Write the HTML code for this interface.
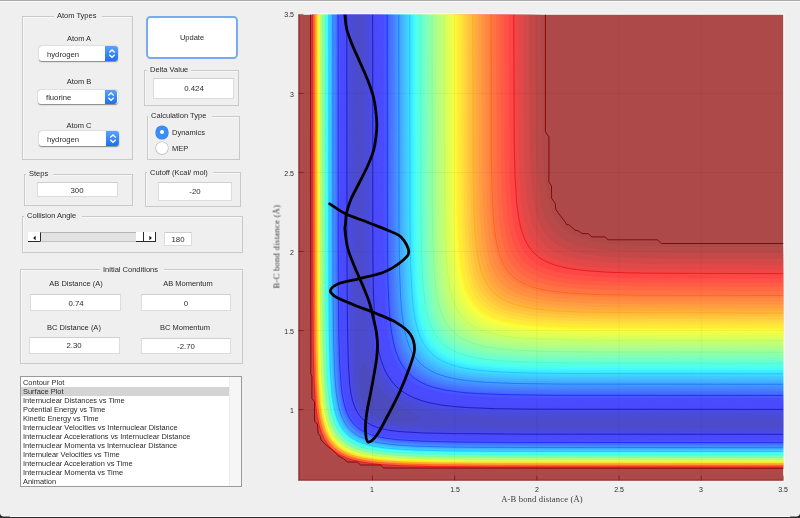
<!DOCTYPE html>
<html><head><meta charset="utf-8"><style>
html,body{margin:0;padding:0}
body{width:800px;height:518px;overflow:hidden;background:#efefef;position:relative;font-family:"Liberation Sans",sans-serif}
.t,.abs,.pn,.gap,.ed,.pp,.ppb,.ar,.btn,.rad,.sl,.slt,.slb,.slb2,.slb3,.lb{position:absolute;box-sizing:border-box}
.t{white-space:nowrap;color:#1e1e1e;will-change:transform}
.pn{border:1px solid #c9c9c9;box-shadow:inset 1px 1px 0 #f8f8f8}
.gap{background:#efefef}
.ed{background:#fff;border:1px solid #dcdcdc;border-top-color:#cfcfcf}
.pp{background:#fff;border-radius:3px;box-shadow:0 0.5px 1.2px rgba(0,0,0,0.45)}
.ppb{background:linear-gradient(#5aa2fb,#1d6ff2);border-radius:0 3px 3px 0}
.btn{background:#fff;border:2px solid #78acf2;border-radius:4.5px}
.rad{width:12.4px;height:12.4px;border-radius:50%;background:#fff;box-shadow:0 0 0 0.6px #b8b8b8, 0 0.6px 1px rgba(0,0,0,0.25)}
.rad.on{background:#3b8cf6;box-shadow:0 0 0 0.6px #3a7fe0}
.rad.on::after{content:"";position:absolute;left:4.2px;top:4.2px;width:4px;height:4px;border-radius:50%;background:#fff}
.sl{background:#e4e4e4}
.slt{background:#e2e2e2;border-top:1px solid #b5b5b5;border-bottom:1px solid #c0c0c0;border-left:1.5px solid #2a2a2a}
.slb{background:#fff;border-bottom:1.2px solid #2a2a2a}
.slb2{background:#fff;border-bottom:1.2px solid #2a2a2a;border-right:1.2px solid #2a2a2a}
.slb3{background:#fff;border-bottom:1.2px solid #2a2a2a;border-right:1.2px solid #2a2a2a}
.lb{background:#fff;border:1px solid #9a9a9a}
</style></head><body>
<div class="abs" style="left:0.00px;top:0.00px;width:800.00px;height:1.00px;background:#a9a9a9"></div>
<div class="abs" style="left:0.00px;top:1.00px;width:800.00px;height:1.00px;background:#fbfbfb"></div>
<div class="abs" style="left:0.00px;top:516.00px;width:800.00px;height:1.00px;background:#fafafa"></div>
<div class="abs" style="left:0.00px;top:517.00px;width:800.00px;height:1.00px;background:#2b2b2b"></div>
<div class="pn" style="left:22.00px;top:16.00px;width:111.00px;height:144.00px;"></div>
<div class="gap" style="left:54.00px;top:13.50px;width:48.00px;height:4px"></div>
<div class="t" style="left:57.00px;top:8.30px;font-size:7.5px;line-height:15.0px;color:#2a2a2a;">Atom Types</div>
<div class="t" style="left:-71.50px;width:300px;text-align:center;top:31.30px;font-size:7.5px;line-height:15.0px;color:#2a2a2a;">Atom A</div>
<div class="pp" style="left:39.00px;top:46.00px;width:79.00px;height:15.00px;"></div>
<div class="ppb" style="left:105.30px;top:46.40px;width:12.90px;height:15.00px"></div>
<svg class="ar" style="left:107.75px;top:48.90px" width="8" height="10" viewBox="0 0 8 10"><path d="M1.3 3.5L4 1L6.7 3.5M1.3 5.8L4 8.3L6.7 5.8" fill="none" stroke="#fff" stroke-width="1.3"/></svg>
<div class="t" style="left:47.40px;top:47.03px;font-size:7.7px;line-height:15.4px;color:#2a2a2a;">hydrogen</div>
<div class="t" style="left:-71.50px;width:300px;text-align:center;top:74.30px;font-size:7.5px;line-height:15.0px;color:#2a2a2a;">Atom B</div>
<div class="pp" style="left:38.00px;top:90.00px;width:80.00px;height:14.00px;"></div>
<div class="ppb" style="left:104.80px;top:89.80px;width:12.70px;height:14.70px"></div>
<svg class="ar" style="left:107.15px;top:92.15px" width="8" height="10" viewBox="0 0 8 10"><path d="M1.3 3.5L4 1L6.7 3.5M1.3 5.8L4 8.3L6.7 5.8" fill="none" stroke="#fff" stroke-width="1.3"/></svg>
<div class="t" style="left:45.60px;top:90.03px;font-size:7.7px;line-height:15.4px;color:#2a2a2a;">fluorine</div>
<div class="t" style="left:-71.50px;width:300px;text-align:center;top:118.30px;font-size:7.5px;line-height:15.0px;color:#2a2a2a;">Atom C</div>
<div class="pp" style="left:39.00px;top:131.00px;width:80.00px;height:15.00px;"></div>
<div class="ppb" style="left:106.20px;top:131.40px;width:12.70px;height:14.80px"></div>
<svg class="ar" style="left:108.55px;top:133.80px" width="8" height="10" viewBox="0 0 8 10"><path d="M1.3 3.5L4 1L6.7 3.5M1.3 5.8L4 8.3L6.7 5.8" fill="none" stroke="#fff" stroke-width="1.3"/></svg>
<div class="t" style="left:47.30px;top:132.03px;font-size:7.7px;line-height:15.4px;color:#2a2a2a;">hydrogen</div>
<div class="btn" style="left:146.00px;top:16.00px;width:92.00px;height:43.00px;"></div>
<div class="t" style="left:41.75px;width:300px;text-align:center;top:30.30px;font-size:7.5px;line-height:15.0px;color:#2a2a2a;">Update</div>
<div class="pn" style="left:144.00px;top:70.00px;width:95.00px;height:36.00px;"></div>
<div class="gap" style="left:147.00px;top:67.70px;width:44.30px;height:4px"></div>
<div class="t" style="left:150.00px;top:62.30px;font-size:7.5px;line-height:15.0px;color:#2a2a2a;">Delta Value</div>
<div class="ed" style="left:153.00px;top:78.00px;width:81.00px;height:21.00px;"></div>
<div class="t" style="left:43.55px;width:300px;text-align:center;top:80.90px;font-size:7.8px;line-height:15.6px;color:#2a2a2a;">0.424</div>
<div class="pn" style="left:147.00px;top:116.00px;width:93.00px;height:44.00px;"></div>
<div class="gap" style="left:148.40px;top:113.50px;width:63.40px;height:4px"></div>
<div class="t" style="left:151.40px;top:108.30px;font-size:7.5px;line-height:15.0px;color:#2a2a2a;">Calculation Type</div>
<div class="rad on" style="left:155.8px;top:126.3px"></div>
<div class="rad" style="left:155.8px;top:142.1px"></div>
<div class="t" style="left:172.20px;top:125.30px;font-size:7.5px;line-height:15.0px;color:#2a2a2a;">Dynamics</div>
<div class="t" style="left:172.20px;top:141.30px;font-size:7.5px;line-height:15.0px;color:#2a2a2a;">MEP</div>
<div class="pn" style="left:24.00px;top:174.00px;width:109.00px;height:32.00px;"></div>
<div class="gap" style="left:26.20px;top:171.60px;width:26.50px;height:4px"></div>
<div class="t" style="left:29.20px;top:166.30px;font-size:7.5px;line-height:15.0px;color:#2a2a2a;">Steps</div>
<div class="ed" style="left:37.00px;top:182.00px;width:81.00px;height:15.00px;"></div>
<div class="t" style="left:-72.70px;width:300px;text-align:center;top:182.90px;font-size:7.8px;line-height:15.6px;color:#2a2a2a;">300</div>
<div class="pn" style="left:145.00px;top:172.00px;width:96.00px;height:35.00px;"></div>
<div class="gap" style="left:146.70px;top:170.40px;width:66.70px;height:4px"></div>
<div class="t" style="left:149.70px;top:165.30px;font-size:7.5px;line-height:15.0px;color:#2a2a2a;">Cutoff (Kcal/ mol)</div>
<div class="ed" style="left:158.00px;top:182.00px;width:74.00px;height:19.00px;"></div>
<div class="t" style="left:45.00px;width:300px;text-align:center;top:183.90px;font-size:7.8px;line-height:15.6px;color:#2a2a2a;">-20</div>
<div class="pn" style="left:22.00px;top:216.00px;width:221.00px;height:37.00px;"></div>
<div class="gap" style="left:24.00px;top:213.60px;width:57.50px;height:4px"></div>
<div class="t" style="left:27.00px;top:208.30px;font-size:7.5px;line-height:15.0px;color:#2a2a2a;">Collision Angle</div>
<div class="sl" style="left:28.00px;top:232.00px;width:128.00px;height:10.00px;"></div>
<div class="slt" style="left:40.00px;top:232.00px;width:96.00px;height:10.00px;"></div>
<div class="slb" style="left:28.00px;top:232.00px;width:12.00px;height:10.00px;"></div>
<div class="slb2" style="left:136.00px;top:232.00px;width:8.00px;height:10.00px;"></div>
<div class="slb3" style="left:144.00px;top:232.00px;width:12.00px;height:10.00px;"></div>
<svg class="ar" style="left:32px;top:234.5px" width="5" height="6"><path d="M3.6 0.8L1.2 3L3.6 5.2Z" fill="#111"/></svg>
<svg class="ar" style="left:148px;top:234.5px" width="5" height="6"><path d="M1.4 0.8L3.8 3L1.4 5.2Z" fill="#111"/></svg>
<div class="ed" style="left:164.00px;top:232.00px;width:28.00px;height:14.00px;"></div>
<div class="t" style="left:27.95px;width:300px;text-align:center;top:231.90px;font-size:7.8px;line-height:15.6px;color:#2a2a2a;">180</div>
<div class="pn" style="left:20.00px;top:269.00px;width:223.00px;height:95.00px;"></div>
<div class="gap" style="left:100.10px;top:267.40px;width:64.20px;height:4px"></div>
<div class="t" style="left:103.10px;top:262.30px;font-size:7.5px;line-height:15.0px;color:#2a2a2a;">Initial Conditions</div>
<div class="t" style="left:-74.15px;width:300px;text-align:center;top:276.30px;font-size:7.5px;line-height:15.0px;color:#2a2a2a;">AB Distance (A)</div>
<div class="t" style="left:37.90px;width:300px;text-align:center;top:276.30px;font-size:7.5px;line-height:15.0px;color:#2a2a2a;">AB Momentum</div>
<div class="t" style="left:-75.80px;width:300px;text-align:center;top:320.30px;font-size:7.5px;line-height:15.0px;color:#2a2a2a;">BC Distance (A)</div>
<div class="t" style="left:35.40px;width:300px;text-align:center;top:320.30px;font-size:7.5px;line-height:15.0px;color:#2a2a2a;">BC Momentum</div>
<div class="ed" style="left:30.00px;top:294.00px;width:91.00px;height:17.00px;"></div>
<div class="t" style="left:-74.25px;width:300px;text-align:center;top:295.90px;font-size:7.8px;line-height:15.6px;color:#2a2a2a;">0.74</div>
<div class="ed" style="left:141.00px;top:294.00px;width:90.00px;height:17.00px;"></div>
<div class="t" style="left:35.95px;width:300px;text-align:center;top:295.90px;font-size:7.8px;line-height:15.6px;color:#2a2a2a;">0</div>
<div class="ed" style="left:29.00px;top:337.00px;width:91.00px;height:17.00px;"></div>
<div class="t" style="left:-75.55px;width:300px;text-align:center;top:337.90px;font-size:7.8px;line-height:15.6px;color:#2a2a2a;">2.30</div>
<div class="ed" style="left:141.00px;top:338.00px;width:90.00px;height:16.00px;"></div>
<div class="t" style="left:35.95px;width:300px;text-align:center;top:338.90px;font-size:7.8px;line-height:15.6px;color:#2a2a2a;">-2.70</div>
<div class="lb" style="left:20.00px;top:376.00px;width:222.00px;height:111.00px;"></div>
<div class="abs" style="left:229.00px;top:377.00px;width:12.00px;height:109.00px;background:#f6f6f6;border-left:1px solid #ececec"></div>
<div class="abs" style="left:21.00px;top:387.00px;width:208.00px;height:9.00px;background:#d4d4d4"></div>
<div class="t" style="left:22.70px;top:375.67px;font-size:7.45px;line-height:14.9px;color:#2a2a2a;">Contour Plot</div>
<div class="t" style="left:22.70px;top:384.67px;font-size:7.45px;line-height:14.9px;color:#2a2a2a;">Surface Plot</div>
<div class="t" style="left:22.70px;top:393.67px;font-size:7.45px;line-height:14.9px;color:#2a2a2a;">Internuclear Distances vs Time</div>
<div class="t" style="left:22.70px;top:402.67px;font-size:7.45px;line-height:14.9px;color:#2a2a2a;">Potential Energy vs Time</div>
<div class="t" style="left:22.70px;top:411.67px;font-size:7.45px;line-height:14.9px;color:#2a2a2a;">Kinetic Energy vs Time</div>
<div class="t" style="left:22.70px;top:420.67px;font-size:7.45px;line-height:14.9px;color:#2a2a2a;">Internuclear Velocities vs Internuclear Distance</div>
<div class="t" style="left:22.70px;top:429.67px;font-size:7.45px;line-height:14.9px;color:#2a2a2a;">Internuclear Accelerations vs Internuclear Distance</div>
<div class="t" style="left:22.70px;top:438.67px;font-size:7.45px;line-height:14.9px;color:#2a2a2a;">Internuclear Momenta vs Internuclear Distance</div>
<div class="t" style="left:22.70px;top:447.67px;font-size:7.45px;line-height:14.9px;color:#2a2a2a;">Internulear Velocities vs Time</div>
<div class="t" style="left:22.70px;top:456.67px;font-size:7.45px;line-height:14.9px;color:#2a2a2a;">Internuclear Acceleration vs Time</div>
<div class="t" style="left:22.70px;top:465.67px;font-size:7.45px;line-height:14.9px;color:#2a2a2a;">Internuclear Momenta vs Time</div>
<div class="t" style="left:22.70px;top:474.67px;font-size:7.45px;line-height:14.9px;color:#2a2a2a;">Animation</div>
<svg style="position:absolute;left:0;top:0" width="800" height="518" viewBox="0 0 800 518">
<defs><clipPath id="pc"><rect x="298.5" y="14.4" width="485.0" height="466.3"/></clipPath></defs>
<g clip-path="url(#pc)">
<rect x="298.0" y="14.5" width="485.5" height="466.5" fill="#ad4949"/>
<path d="M311.5 14.5 541.5 14.5 542 125 542.9 154.5 544.4 176 546.9 194 550.5 207.8 552.8 213.5 555.5 218.6 558.6 223 562.2 227 566.3 230.5 571 233.5 582 238.3 596.5 241.8 615 244.2 637.5 245.7 668 246.5 783.5 247.1 783.5 468.5 484 468.4 439 468.1 398 467.1 370.5 465.1 353.5 462.1 346.5 460 340.5 457.5 335 454.3 330 450.2 325.9 445.5 322.4 440 319.4 433 317.4 426 314.4 408.5 312.4 379.5 311.3 307 311.2 14.5Z" fill="#b84949"/>
<path d="M311.5 14.5 535 14.5 535.5 130 536.4 160 537.9 182 540.4 200 544 214 546.5 220 549.2 225 552.4 229.5 556 233.4 560.3 237 565 240 570.5 242.6 576.5 244.8 591 248.2 610 250.6 633 252 664 252.8 783.5 253.3 783.5 468.3 485.5 468.1 433.5 467.7 400 466.9 373 465.1 363 463.7 354.5 462 347 459.8 340.5 457.1 335 453.9 330.3 450 326.3 445.5 323 440.2 320.2 434 318 427 316.1 418.5 314.8 409 312.9 383.5 312 351 311.6 301 311.5 14.5Z" fill="#c54848"/>
<path d="M312 14.5 529 14.5 529.5 133.5 530.4 164 531.8 186.5 534.3 205 538 219.5 540.4 225.5 543.1 230.5 546.2 235 549.8 239 554 242.5 558.6 245.5 564 248.1 570.4 250.5 585.3 254 604.5 256.4 628 257.7 659.5 258.5 783.5 259 783.5 468 485 467.8 433.5 467.4 399.5 466.6 373 464.8 363 463.4 354.5 461.7 347 459.5 340.5 456.7 335.2 453.5 330.5 449.7 326.5 445 323 439.5 320.4 433.5 318.1 426 316.4 418 315 408.3 313.2 382.5 312.3 350.5 311.9 300.5 311.8 14.5Z" fill="#d34848"/>
<path d="M312.5 14.5 523.5 14.5 524 138 524.8 169 526.2 191.5 528.6 210 532.3 224.5 534.7 230.5 537.5 235.9 540.7 240.5 544.4 244.5 548.6 248 553.5 251.1 559 253.7 565.3 256 580.5 259.5 600 261.8 623.5 263.1 656 263.9 783.5 264.4 783.5 467.7 486 467.5 434 467.1 400.5 466.3 373.5 464.5 355.2 461.5 347.5 459.3 341 456.5 335.5 453.3 330.9 449.5 326.9 445 323.5 439.6 320.8 433.5 318.5 426.3 316.7 418 315.4 408.5 313.5 383 312.6 350.5 312.2 300.5 312 14.5Z" fill="#e14848"/>
<path d="M312.5 14.5 518.2 14.5 518.8 149.5 520 182 521.9 205 523.5 215.4 525.4 224 527.8 231.5 530.7 238 534 243.5 538.2 248.5 543 252.7 548.5 256.2 558.5 260.5 571 263.7 586.5 266 606 267.6 629.5 268.5 661 269.1 783.5 269.4 783.5 467.4 485.5 467.3 433.5 466.9 400 466 373.5 464.2 363.5 462.8 355 461.1 347.5 458.9 341 456.1 335.5 452.8 331 449 327 444.4 323.6 439 321 433 318.7 425.5 317 417.5 315.6 407.5 313.8 382 312.9 350 312.5 300 312.3 14.5Z" fill="#ef4747"/>
<path d="M313 14.5 513.3 14.5 513.9 153.5 515 186 517 209.5 518.5 219.6 520.5 228.5 522.8 236 525.7 242.5 529 248.1 533.1 253 538 257.3 543.5 260.9 553.5 265.2 566.4 268.5 582 270.8 602 272.4 626 273.3 658 273.8 783.5 274.1 783.5 467.1 487 467 434.5 466.6 401 465.7 374.7 464 364.5 462.7 356 461 348.5 458.8 342 456.2 336.5 453 331.6 449 327.5 444.4 324.1 439 321.4 433 319 425.5 317.2 417 315.9 407.5 314.1 382 313.2 349.5 312.8 299.5 312.6 14.5Z" fill="#fd4747"/>
<path d="M313 14.5 508.7 14.5 509.3 156 510.3 189.5 512.2 213 513.7 223 515.6 232 518 240 520.8 246.5 524.4 252.5 528.5 257.5 533 261.5 538.5 265.1 548.5 269.5 561.5 272.9 577.5 275.3 597.5 276.8 621.5 277.7 654.5 278.3 783.5 278.6 783.5 466.8 487.5 466.7 435.5 466.3 402 465.5 375 463.7 365 462.4 356 460.6 348.6 458.5 342.5 456 337 452.9 332 448.9 328 444.4 324.5 439 321.8 433 319.5 425.8 317.7 417.5 316.3 408 314.4 382.5 313.5 350 313.1 300 312.9 14.5Z" fill="#ff5145"/>
<path d="M313.5 14.5 504.3 14.5 504.8 158.5 505.8 192 507.7 216 509.1 226.5 511 235.5 513.4 243.5 516 250 519.5 256 523.4 261 528 265.3 533.5 269 543.5 273.5 556.5 277 572.5 279.4 593 281 617.5 282 650.5 282.5 783.5 282.8 783.5 466.5 487.5 466.4 435.5 466 401.5 465.1 375.5 463.4 365 462.1 356.5 460.4 349 458.2 342.5 455.5 337 452.4 332.2 448.5 328.2 444 325 439 322 432.5 319.8 425.5 317.9 417 316.5 407 314.7 381.5 313.8 349.5 313.4 299.5 313.3 14.5Z" fill="#ff5c45"/>
<path d="M314 14.5 500.1 14.5 500.6 161.5 501.6 195.5 503.4 219.5 505 230.5 506.8 239.5 509 247 511.9 254 515.3 260 519.2 265 524 269.4 529.3 273 539.5 277.6 552.2 281 568.5 283.5 589 285.1 613.5 286 647 286.5 783.5 286.8 783.5 466.2 487.5 466.1 435.5 465.7 402 464.9 375 463 356.5 460 349 457.8 342.5 455.1 337.2 452 332.5 448.2 328.4 443.5 325 438.2 322.2 432 320 425 318.2 416.5 316.9 407 315 381.4 314.1 349 313.7 299 313.6 14.5Z" fill="#ff6744"/>
<path d="M314 14.5 496.1 14.5 496.6 164.5 497.6 198.5 499.4 223 500.9 234 502.7 243 505 250.8 507.7 257.5 511.1 263.5 515 268.6 519.7 273 525 276.7 535.5 281.4 548.5 284.9 564.5 287.3 585.5 288.9 610.5 289.9 644.5 290.4 783.5 290.7 783.5 465.9 487.5 465.8 436 465.4 402 464.5 375.5 462.8 357 459.8 349.5 457.6 343.2 455 337.5 451.7 332.9 448 328.9 443.5 325.5 438.2 322.7 432 320.4 425 318.6 416.5 317.2 407 315.3 381.5 314.5 349.5 314 299 313.9 14.5Z" fill="#ff7243"/>
<path d="M314.5 14.5 492.3 14.5 492.8 167 493.7 201.5 495.5 226 497 237 498.8 246 501 254 503.8 261 507.1 267 511 272.1 515.7 276.5 521 280.2 531.4 285 544.3 288.5 560.5 290.9 581.5 292.6 606.5 293.5 641 294.1 783.5 294.3 783.5 465.6 488.5 465.5 436 465.1 402.5 464.2 376.3 462.5 357.5 459.5 350 457.4 343.5 454.7 338 451.5 333 447.5 329 442.9 325.6 437.5 322.9 431.5 320.6 424 317.5 406.4 315.6 380.5 314.8 348.5 314.4 298.5 314.2 14.5Z" fill="#ff7d42"/>
<path d="M315 14.5 488.6 14.5 489.1 169.5 490.1 204.5 491.8 229 493.2 240 495 249.1 497.2 257 500 264.2 503.5 270.5 507.3 275.5 512 280 517 283.5 527.5 288.4 540.5 292 557 294.5 578 296.1 603 297.1 638 297.6 783.5 297.9 783.5 465.3 488.5 465.2 436.5 464.8 403 463.9 376 462.1 357.5 459.1 350.2 457 344 454.5 338.5 451.3 333.5 447.3 329.5 442.9 326.1 437.5 323.3 431.5 321 424.1 319.2 416 317.9 406.5 316 381 315.1 348.5 314.7 298.5 314.5 14.5Z" fill="#ff8842"/>
<path d="M315 14.5 485.1 14.5 485.6 172 486.5 207.2 488.2 232 489.7 243 491.5 252.5 493.7 260.5 496.4 267.5 499.7 273.5 503.5 278.6 508 283 513.5 286.9 524 291.8 537 295.4 553.5 297.9 575 299.5 600.5 300.5 635.5 301 783.5 301.3 783.5 465 489 464.8 437 464.4 403 463.6 376.5 461.8 358 458.8 350.5 456.7 344 454 338.5 450.8 333.8 447 329.8 442.5 326.5 437.4 323.6 431 321.4 424 319.5 415.5 318.2 406 316.3 380.5 315.4 348.5 315 298 314.9 14.5Z" fill="#ff9241"/>
<path d="M315.5 14.5 481.7 14.5 482.2 174 483.1 209.5 484.8 234.5 486.1 245.5 488 255.3 490.2 263.5 492.9 270.5 496.2 276.5 500 281.7 504.5 286.2 509.8 290 520 294.9 533 298.5 549.5 301.1 571.5 302.8 597 303.7 632.5 304.2 783.5 304.5 783.5 464.7 488.5 464.5 436.5 464.1 403.5 463.3 376.8 461.5 358.2 458.5 350.5 456.3 344 453.5 338.5 450.3 334 446.6 330 442 326.5 436.5 323.9 430.5 321.7 423.5 319.9 415.5 318.5 405.6 316.6 380 315.8 348 315.3 298 315.2 14.5Z" fill="#ff9d40"/>
<path d="M316 14.5 478.4 14.5 478.9 176.5 479.8 212 481.4 237 484.5 257.5 486.8 266 489.4 273 492.5 279 496.4 284.5 501 289.1 506.3 293 516.7 298 530 301.7 547 304.3 568.5 306 594.5 306.9 630 307.4 783.5 307.7 783.5 464.3 489.5 464.2 437.5 463.8 404 463 377 461.2 358.5 458.2 351 456 344.9 453.5 339.5 450.4 334.5 446.4 330.5 442 327 436.5 324.3 430.5 322 423.2 320.2 415 318.9 405.5 317 380 316.1 347.5 315.7 297.5 315.5 14.5Z" fill="#ffa840"/>
<path d="M316 14.5 475.3 14.5 475.7 178.5 476.6 214.5 478.2 239.5 479.6 251 481.3 260.5 483.5 268.7 486.2 276 489.5 282.3 493.2 287.5 497.7 292 503 295.9 508 298.7 513.4 301 526.5 304.7 543.5 307.3 565.5 309 591.5 309.9 627.5 310.4 783.5 310.7 783.5 464 490 463.9 438 463.5 404 462.6 377.5 460.8 359 457.9 351.5 455.7 345 453.1 339.5 449.9 334.7 446 330.7 441.5 327.5 436.4 324.6 430 322.4 423 320.5 414.5 319.2 405 317.3 379.5 316.5 347.5 316 297 315.9 14.5Z" fill="#ffb33f"/>
<path d="M316.5 14.5 472.2 14.5 472.6 180.5 473.5 216.5 475.1 242 476.5 253.5 478.2 263 480.4 271.5 483 278.5 486 284.5 489.8 290 494.1 294.5 499.5 298.6 504.5 301.4 510 303.8 523 307.5 540 310.2 562 311.9 588 312.9 624.5 313.4 783.5 313.7 783.5 463.7 489.5 463.5 437.5 463.1 404.5 462.3 377.7 460.5 359.2 457.5 351.5 455.3 345 452.6 339.8 449.5 335 445.6 330.9 441 327.5 435.5 324.9 429.5 322.7 422.5 321 414.5 319.5 404.5 317.7 379 316.8 347 316.4 297 316.2 14.5Z" fill="#ffbe3e"/>
<path d="M317 14.5 469.2 14.5 469.6 182.5 470.5 219 472.1 244.5 475.1 265.5 477.3 274 480 281.4 483.1 287.5 487 293 491.3 297.5 496.5 301.4 501.5 304.3 507 306.7 520.5 310.5 537.5 313.1 559.5 314.8 586 315.8 622.5 316.3 783.5 316.5 783.5 463.3 490.5 463.2 438.5 462.8 405 462 378 460.2 359.5 457.2 352 455 345.9 452.5 340.5 449.4 335.5 445.4 331.5 440.9 328 435.5 325.3 429.5 323 422.1 321.2 413.5 319.9 404 318 378.5 317.2 346 316.7 296 316.6 14.5Z" fill="#ffc93d"/>
<path d="M317 14.5 466.4 14.5 466.7 185 467.6 221.5 469.2 247 472.2 268 474.3 276.5 477 283.9 480.1 290 483.9 295.5 488.1 300 493.5 304.1 498.5 307 504 309.4 517.5 313.2 534.5 315.9 556.5 317.6 582.5 318.5 619.5 319 783.5 319.3 783.5 463 491 462.8 439 462.4 405 461.6 378.5 459.8 360 456.8 352.5 454.7 346 452 340.5 448.8 335.8 445 331.8 440.5 328.5 435.4 325.6 429 323.4 422 321.6 413.5 320.3 404 318.4 378.5 317.5 345.5 317.1 296 316.9 14.5Z" fill="#ffd43d"/>
<path d="M317.5 14.5 463.5 14.5 463.9 186.5 464.7 223.5 466.3 249 467.6 260.5 469.3 270.5 471.5 279 474 286.1 477.2 292.5 480.9 298 485.5 302.8 490.5 306.7 495.5 309.6 501 312 514.5 315.9 531.5 318.6 554 320.3 580.5 321.3 617.5 321.8 783.5 322 783.5 462.6 491 462.5 438.5 462.1 405 461.2 379 459.5 368.5 458.1 360 456.4 352.5 454.2 346 451.5 340.5 448.3 336 444.5 332 440 328.6 434.5 325.9 428.5 323.8 421.5 322 413.3 320.6 403.5 318.8 378 317.9 346 317.5 296 317.3 14.5Z" fill="#ffdf3c"/>
<path d="M318 14.5 460.8 14.5 461.2 188.5 462 225.5 463.5 251 466.5 272.5 468.6 281 471.2 288.5 474.3 295 478 300.4 482.3 305 487.5 309.1 492.5 312.1 498 314.5 511.5 318.5 529 321.2 551.5 323 578 323.9 615.5 324.4 783.5 324.6 783.5 462.3 491.5 462.1 439.5 461.7 406 460.9 379 459.1 360.5 456.1 353.2 454 347 451.5 341.5 448.3 336.5 444.3 332.5 439.8 329.1 434.5 326.4 428.5 324.1 421 322.4 413 321 403.4 319.1 377.5 318.3 345 317.8 295.5 317.7 14.5Z" fill="#ffe93b"/>
<path d="M318.5 14.5 458.1 14.5 458.4 184.5 459.1 221 460.3 247 462.6 268.5 464.3 277.5 466.3 285 468.7 291.5 471.7 297.5 475 302.5 479 307 483.5 310.8 489 314.2 495 316.9 502 319.3 519 322.8 541.5 325.1 568.5 326.3 606.5 326.9 783.5 327.2 783.5 461.9 491.5 461.7 440 461.3 405.9 460.5 379.5 458.7 361 455.8 353.5 453.6 347.1 451 341.5 447.7 336.9 444 332.9 439.5 329.5 434.1 326.7 428 324.5 421 322.8 413 321.4 403 319.5 377.5 318.7 345 318.2 295 318.1 14.5Z" fill="#fff43a"/>
<path d="M318.5 14.5 455.5 14.5 455.8 186.5 456.5 223.5 457.7 249.5 460 271 461.7 280 463.7 287.5 466.1 294 469.1 300 472.5 305.1 476.5 309.6 481.2 313.5 486.5 316.7 492.5 319.5 499.5 321.8 516.5 325.4 539 327.6 566 328.8 604.5 329.4 783.5 329.7 783.5 461.5 492 461.4 440 461 406 460.1 379.5 458.3 369.5 457 361 455.3 353.5 453.1 347.2 450.5 342 447.5 337.1 443.5 333.2 439 330 434 327.3 428 325 420.9 323.2 412.5 321.8 403 319.9 377.5 319 344.5 318.6 295 318.5 14.5Z" fill="#f7ff3e"/>
<path d="M319 14.5 453 14.5 453.3 188.5 453.9 225.5 455.1 251.5 457.5 273.5 459.2 282.5 461.2 290 463.6 296.5 466.6 302.5 470 307.6 473.9 312 478.5 315.8 484 319.2 490 321.9 497 324.3 514 327.8 537 330.1 564 331.3 602.5 331.9 783.5 332.2 783.5 461.1 492.5 461 440 460.6 406.5 459.7 380.4 458 370 456.6 361.5 455 354 452.8 347.5 450.1 342.2 447 337.5 443.1 333.5 438.6 330.3 433.5 327.6 427.5 325.4 420.5 323.5 412 322.2 402.5 320.3 377 319.4 345 319 294.5 318.9 14.5Z" fill="#edff49"/>
<path d="M319.5 14.5 450.5 14.5 450.8 190 451.4 227.5 452.6 253.5 454.9 275.5 456.6 284.5 458.6 292 461 298.7 464 304.8 467.5 310 471.5 314.4 476 318.2 481.5 321.6 487.5 324.3 494.5 326.7 511.5 330.2 534.6 332.5 562 333.7 600.5 334.3 783.5 334.6 783.5 460.8 493 460.6 441 460.2 407.5 459.4 380.5 457.6 362 454.6 354.6 452.5 348.5 450 343 446.9 338 442.9 334 438.3 330.6 433 327.9 427 325.7 420 324 412 322.6 402 320.7 376.5 319.8 344.5 319.4 294.5 319.3 14.5Z" fill="#e3ff53"/>
<path d="M320 14.5 448 14.5 448.3 192 449 229.5 450.1 255.5 452.5 277.8 454.1 286.5 456.2 294.5 458.6 301 461.5 307 465 312.2 469 316.7 473.6 320.5 479 323.9 485 326.6 492 329 500.1 331 509.5 332.6 532.5 334.9 559.5 336 598.5 336.6 783.5 336.9 783.5 460.4 493.5 460.2 442 459.8 408 459 381 457.2 362.5 454.2 355 452.1 348.6 449.5 343 446.2 338.4 442.5 334.4 438 331 432.6 328.3 426.5 326.1 419.5 324.4 411.5 323 401.8 321.1 376 320.2 343.5 319.8 294 319.7 14.5Z" fill="#d9ff5d"/>
<path d="M320.5 14.5 445.7 14.5 445.9 194 446.6 231.5 447.8 258 450.1 280 451.8 289 453.7 296.5 456.1 303 459 309.1 462.5 314.4 466.6 319 471.5 323 476.5 326.1 482.8 329 490 331.4 498 333.3 507.5 335 530.5 337.2 558 338.3 597 338.9 783.5 339.2 783.5 460 493.5 459.8 441.5 459.4 407.5 458.5 381 456.8 371 455.4 362.5 453.8 355 451.6 348.8 449 343.5 445.9 338.7 442 334.7 437.5 331.5 432.4 328.7 426 326.5 419 324.7 410.5 323.4 401 321.5 375.5 320.7 343 320.2 293 320.1 14.5Z" fill="#cfff68"/>
<path d="M321 14.5 443.3 14.5 443.6 195.5 444.2 233.5 445.4 260 447.8 282.5 449.5 291.5 451.5 299 454 305.9 457 311.9 460.5 317 464.5 321.4 469 325.2 474.5 328.5 481 331.5 488 333.8 505.5 337.3 528.5 339.5 556 340.6 595.5 341.2 783.5 341.5 783.5 459.5 493.5 459.4 441.5 459 407.5 458.1 381 456.3 371.2 455 362.5 453.2 355 451 349 448.5 343.5 445.2 339 441.5 335.1 437 331.9 432 329.2 426 327 418.9 325.2 410.5 323.8 401 322 375.5 321.1 343 320.7 293 320.5 14.5Z" fill="#c5ff72"/>
<path d="M321 14.5 441 14.5 441.3 197.5 441.9 235.5 443.1 262 445.4 284.5 447.1 293.5 449.1 301 451.5 307.7 454.5 313.8 458 319 462 323.5 466.5 327.2 472 330.6 478.2 333.5 485.5 335.9 503 339.5 526 341.7 553.5 342.8 593 343.4 783.5 343.7 783.5 459.1 494.5 459 442 458.6 408.5 457.7 382.4 456 372 454.6 363.5 453 356 450.8 349.5 448.1 344.2 445 339.5 441.2 335.5 436.6 332.3 431.5 329.6 425.5 327.4 418.5 325.6 410 324.3 400.5 322.4 375 321.5 342 321.1 292.5 320.9 14.5Z" fill="#bbff7c"/>
<path d="M321.5 14.5 438.7 14.5 439 199 439.6 237 440.8 263.5 443.1 286 444.7 295 446.8 303 449.1 309.5 452 315.5 455.5 320.9 459.6 325.5 464.4 329.5 469.5 332.7 475.5 335.5 483 338 491.1 340 500.5 341.6 524 343.9 551.5 345 591.5 345.6 783.5 345.9 783.5 458.7 494.5 458.5 442.5 458.1 409 457.3 382.1 455.5 363.7 452.5 356.5 450.4 350 447.7 344.5 444.5 340 440.8 336 436.3 332.7 431 330 425 327.8 418 326 409.5 324.7 400 322.9 375 322 343 321.6 292.5 321.4 14.5Z" fill="#b1ff86"/>
<path d="M322 14.5 436.5 14.5 436.7 200.5 437.3 239 438.5 265.5 440.8 288 442.5 297 444.5 305 447 312 450 318 453.5 323.3 457.5 327.8 462 331.5 467.6 335 474 337.9 481 340.2 489 342.2 498.5 343.8 522 346.1 549.5 347.2 589.5 347.8 783.5 348 783.5 458.3 495 458.1 443 457.7 409.5 456.9 382.5 455.1 372.5 453.7 364 452 356.9 450 350.5 447.4 345 444.1 340.5 440.5 336.5 436 333.3 431 330.6 425 328.4 418 326.5 409.5 325.2 400 323.3 374.5 322.4 342 322 291.5 321.8 14.5Z" fill="#a8ff91"/>
<path d="M322.5 14.5 434.3 14.5 434.5 203 435.2 241.5 436.3 268 438.7 290.5 440.3 299.5 442.4 307.5 445 314.5 448 320.5 451.4 325.5 455.5 330 460.3 334 466 337.4 472 340.1 479.3 342.5 497 346 520.5 348.2 548.5 349.3 588.5 349.9 783.5 350.1 783.5 457.8 495.5 457.7 443.5 457.3 410 456.4 383 454.6 364.5 451.6 357.2 449.5 351 447 345.5 443.8 340.9 440 336.9 435.5 333.5 430 330.9 424 328.7 417 327 409 325.6 399 323.8 374 322.9 342 322.5 292 322.3 14.5Z" fill="#9eff9b"/>
<path d="M323 14.5 432.1 14.5 432.4 204 432.9 242.5 434.1 269.5 436.4 292 438 301 440.1 309 442.6 316 445.5 322 449 327.3 453.2 332 458 335.9 463.5 339.3 469.5 342 476.9 344.5 485 346.4 494.5 348.1 518 350.3 546 351.4 586 352 783.5 352.2 783.5 457.4 496 457.2 444.5 456.8 410.5 456 383.5 454.2 365 451.2 357.5 449 351.4 446.5 346 443.3 341.3 439.5 337.3 435 334 429.7 331.3 423.5 329.1 416.5 327.4 408.5 326 398.5 324.3 373.5 323.4 341.5 322.9 291.5 322.8 14.5Z" fill="#94ffa5"/>
<path d="M323.5 14.5 430 14.5 430.2 206 430.8 244.5 432 271.5 434.3 294 436 303.5 438 311.2 440.5 318.2 443.5 324.3 447 329.5 451 334 455.9 338 461 341.2 467.1 344 474.5 346.5 492 350.1 516 352.4 544 353.5 584 354.1 783.5 354.3 783.5 456.9 496.5 456.7 444.5 456.3 410.5 455.5 384 453.7 365.5 450.7 358 448.6 351.8 446 346.5 442.9 341.7 439 337.8 434.5 334.5 429.3 331.7 423 329.6 416 327.9 408 326.5 398 324.7 373 323.9 341 323.4 291 323.3 14.5Z" fill="#8affb0"/>
<path d="M324 14.5 427.8 14.5 428.1 207 428.7 246 429.8 273 432.1 296 433.8 305 435.8 313 438.3 320 441.2 326 444.9 331.5 448.9 336 453.5 339.8 459 343.2 465 346 472.5 348.5 481 350.6 490.5 352.2 514.5 354.4 542.5 355.5 583 356.1 783.5 356.3 783.5 456.4 496.5 456.3 445 455.8 410.9 455 384.5 453.2 366 450.3 358.5 448.1 352.2 445.5 347 442.5 342.1 438.5 338.2 434 335 428.8 332.2 422.5 330.1 415.5 328.4 407.5 327 397.5 325.2 372.5 324.4 340.5 323.9 290.5 323.8 14.5Z" fill="#80ffba"/>
<path d="M324.5 14.5 425.7 14.5 426 209 426.6 248 427.7 275 430.1 298 431.7 307 433.7 315 436.2 322 439.2 328 442.8 333.5 446.8 338 451.5 341.9 457 345.3 463.5 348.3 470.5 350.6 479 352.6 488.5 354.2 512.5 356.5 540.5 357.6 581 358.1 783.5 358.4 783.5 455.9 497 455.8 445 455.3 411.2 454.5 384.5 452.7 374.5 451.4 366 449.7 358.6 447.5 352.5 444.9 347 441.7 342.6 438 338.7 433.5 335.5 428.4 332.9 422.5 330.6 415 328.9 407 327.5 397 325.7 372 324.9 340 324.4 290 324.3 14.5Z" fill="#76ffc4"/>
<path d="M325 14.5 423.7 14.5 423.9 210.5 424.5 249.5 425.6 276.5 428 300 429.6 309 431.7 317 434.2 324 437.1 330 440.8 335.5 444.8 340 449.5 343.9 455 347.3 461.5 350.3 468.5 352.6 477 354.6 486.5 356.2 510.5 358.5 538.5 359.6 579.5 360.1 783.5 360.4 783.5 455.4 497.5 455.3 446 454.9 411.7 454 385 452.2 375 450.9 366.5 449.2 359.1 447 353 444.4 347.5 441.2 343.1 437.5 339.2 433 336 427.9 333.4 422 331.1 414.5 329.4 406.5 328 396.5 326.3 371.5 325.4 339.5 325 289.5 324.8 14.5Z" fill="#6cffcf"/>
<path d="M325.5 14.5 421.6 14.5 421.8 212 422.4 251.5 423.5 278.5 425.9 301.5 427.6 311 429.6 319 432.1 326 435.1 332 438.8 337.5 442.8 342 447.7 346 453.4 349.5 460 352.4 467 354.7 475.5 356.7 485 358.3 509 360.5 537 361.6 578 362.1 783.5 362.3 783.5 454.9 498.5 454.7 446.5 454.3 412.5 453.5 385.5 451.7 375.5 450.4 367 448.7 359.6 446.5 353.5 443.9 348 440.7 343.6 437 339.7 432.5 336.5 427.4 333.9 421.5 331.6 414 329.9 406 328.6 396 326.8 371 325.9 338.5 325.5 288 325.3 14.5Z" fill="#62ffd9"/>
<path d="M326 14.5 419.5 14.5 419.8 214 420.4 253.5 421.5 280.5 423.8 303.5 425.5 313 427.6 321 430.1 328 433.1 334 436.8 339.5 440.8 344 445.7 348 451.5 351.5 458 354.4 465 356.7 473.5 358.7 483 360.2 507 362.4 535 363.5 576 364.1 783.5 364.3 783.5 454.4 498.5 454.2 446.5 453.8 412.5 452.9 386 451.2 376 449.8 367.5 448.1 360.2 446 354 443.4 348.5 440.2 344.1 436.5 340.2 432 337.1 427 334.4 421 332.3 414 330.5 405.6 329.2 396 327.4 371 326.5 338.5 326.1 288 325.9 14.5Z" fill="#58ffe3"/>
<path d="M326.5 14.5 417.5 14.5 417.7 216 418.3 255.5 419.5 282.5 421.8 305.5 423.5 315 425.6 323 428.2 330 431.1 336 434.8 341.5 438.9 346 443.8 350 449.5 353.4 456 356.3 463 358.6 471.5 360.6 481 362.2 505.5 364.4 534 365.5 575 366 783.5 366.3 783.5 453.8 499 453.7 447 453.2 413 452.4 386.5 450.6 376.5 449.3 368 447.6 360.8 445.5 354.5 442.9 349 439.6 344.7 436 340.8 431.5 337.7 426.5 335 420.5 332.8 413.5 331.1 405.5 329.8 396 328 370.5 327.1 337.5 326.6 287.5 326.5 14.5Z" fill="#4effee"/>
<path d="M327.5 14.5 415.5 14.5 415.7 217 416.3 256.5 417.4 284 419.7 307 421.4 316.5 423.5 324.5 426 331.5 429.2 338 432.9 343.5 437 348 441.9 352 447.5 355.4 454 358.3 461 360.5 469.5 362.5 479 364.1 503.5 366.4 532 367.5 573 368 783.5 368.2 783.5 453.2 499.5 453.1 447.5 452.7 414 451.8 387.5 450.1 369 447.2 361.5 445 355.4 442.5 350 439.4 345.5 435.7 341.7 431.5 338.5 426.5 335.8 420.5 333.5 413.3 331.7 405 330.4 395.5 328.5 370 327.7 337 327.2 287 327.1 14.5Z" fill="#45fbf9"/>
<path d="M328 14.5 413.5 14.5 413.7 218.5 414.3 258 415.4 285.5 417.7 308.5 419.4 318 421.4 326 424 333.4 427 339.5 430.5 344.9 434.6 349.5 439.5 353.6 445 357 451.5 360 459 362.4 467.5 364.5 477 366 501.5 368.3 530 369.4 571 369.9 783.5 370.1 783.5 452.7 499.5 452.5 447.5 452.1 414 451.2 387.8 449.5 377.5 448.1 369.2 446.5 362.2 444.5 356 442 350.5 438.8 346 435.1 342 430.6 338.8 425.5 336.2 419.5 334 412.5 331 395 329.1 369.5 328.3 337 327.8 287 327.7 14.5Z" fill="#3fefff"/>
<path d="M328.5 14.5 411.5 14.5 411.7 220 412.2 259.5 413.4 287 415.7 310.5 417.4 320 419.4 328 422 335.3 425 341.4 428.5 346.7 432.8 351.5 437.6 355.5 443.2 359 449.5 361.9 457 364.4 465.5 366.4 475 368 499.5 370.2 528 371.3 569.5 371.9 783.5 372.1 783.5 452.1 501 451.9 449 451.5 414.5 450.6 388.5 448.9 370 446 363 444 356.5 441.3 351 438.1 346.5 434.5 342.6 430 339.5 425 336.8 419 334.6 412 332.9 404 331.5 394 329.8 369 328.9 336.5 328.5 286.5 328.3 14.5Z" fill="#40e3ff"/>
<path d="M329 14.5 409.5 14.5 409.7 221.5 410.2 261.5 411.4 289 413.7 312.5 415.4 322 417.5 330 420 337.1 423.1 343.5 426.8 349 430.9 353.5 435.7 357.5 441.5 361 448 363.9 455.5 366.4 464 368.4 473.5 369.9 498 372.2 526.5 373.3 568 373.8 783.5 374 783.5 451.4 501.5 451.3 449.5 450.9 415 450 389 448.3 370.5 445.3 363 443.2 357 440.7 351.5 437.5 347.2 434 343.5 429.8 340.1 424.5 337.5 418.6 335.4 412 333.7 404 332.3 394.5 330.4 369 329.6 336 329.1 286 328.9 14.5Z" fill="#41d7ff"/>
<path d="M330 14.5 407.5 14.5 407.7 223.5 408.3 263.5 409.4 291 411.7 314.5 413.5 324 415.5 332 418 339 421.2 345.5 425 351 429 355.4 433.9 359.5 439.5 362.9 446 365.8 453.5 368.3 462 370.3 472 371.9 496.5 374.1 525 375.2 566.5 375.7 783.5 375.9 783.5 450.8 502 450.6 450 450.2 416 449.4 389.5 447.6 371.5 444.8 364.5 442.9 358 440.3 352.5 437.1 348 433.5 344 429 340.8 424 338.1 418 336 411.1 334.3 403 332.9 393.5 331.1 368 330.2 335 329.8 285 329.6 14.5Z" fill="#41ccff"/>
<path d="M330.5 14.5 405.5 14.5 405.7 225 406.2 265 407.4 292.5 409.7 316 411.4 325.5 413.5 333.8 416 340.8 419 347 422.7 352.5 427 357.3 432 361.4 437.5 364.8 444 367.7 451.5 370.2 460 372.2 470 373.8 494.5 376 523 377.1 565 377.6 783.5 377.8 783.5 450.1 503 450 450 449.5 416 448.7 390 447 380 445.7 371.5 444 364.5 442 358.4 439.5 353 436.4 348.5 432.7 344.8 428.5 341.5 423.4 338.9 417.5 336.7 410.5 335 402.5 333.6 393 331.8 368 330.9 336 330.5 285.5 330.3 14.5Z" fill="#42c0ff"/>
<path d="M331.5 14.5 403.5 14.5 403.7 226.5 404.2 266.5 405.3 294 407.7 318 409.4 327.5 411.5 335.5 414 342.6 417.1 349 420.8 354.5 425 359.1 430 363.3 435.5 366.6 442 369.6 449.5 372.1 458 374.1 468 375.7 492.5 378 521 379 563 379.6 783.5 379.8 783.5 449.4 503.5 449.3 451.5 448.8 417 448 391 446.3 372.5 443.4 365.5 441.4 359 438.8 353.5 435.6 349.1 432 345.2 427.5 342.1 422.5 339.4 416.5 337.3 409.5 334.3 392 332.5 366.5 331.6 333.5 331.2 283 331 14.5Z" fill="#43b4ff"/>
<path d="M332 14.5 401.4 14.5 401.6 227.5 402.2 268 403.3 295.5 405.6 319.5 407.3 329 409.4 337 412 344.5 415 350.6 418.5 356 423 361 427.8 365 433.5 368.5 440 371.5 447.6 374 456 376 466 377.7 491 379.9 519.5 381 561.5 381.5 783.5 381.7 783.5 448.7 503.5 448.5 451 448.1 417.5 447.3 391 445.5 373 442.7 365.5 440.5 359.5 438 354.3 435 350 431.5 346 427 342.9 422 340.2 416 338.1 409 335.1 391.5 333.3 367 332.4 335 332 284.5 331.8 14.5Z" fill="#44a8ff"/>
<path d="M333 14.5 399.4 14.5 399.6 229.5 400.2 270 401.3 297.5 403.6 321.5 405.3 331 407.4 339 410 346.3 413 352.5 416.6 358 421 362.9 426 367 431.6 370.5 438.3 373.5 445.9 376 454.5 378 464.5 379.7 489 381.9 517.5 383 559.5 383.5 783.5 383.7 783.5 447.9 505 447.8 452.5 447.3 418 446.5 392 444.8 374 442 366.9 440 360.5 437.4 355 434.2 350.5 430.6 346.5 426 343.5 421.1 341 415.4 338.9 408.5 337.2 400.5 335.9 391 334.1 365.5 333.2 332.5 332.8 282 332.6 14.5Z" fill="#459dff"/>
<path d="M333.5 14.5 397.4 14.5 397.5 231 398.1 271.5 399.2 299 401.5 323 403.2 332.5 405.4 341 408 348.3 411.1 354.5 414.7 360 419 364.8 424 368.9 429.8 372.5 436.5 375.5 444 378 452.5 380 462.5 381.6 487.5 383.9 516 384.9 558 385.5 783.5 385.7 783.5 447.1 506 446.9 452.5 446.5 418.5 445.7 392.6 444 374.5 441.2 367 439 361 436.5 355.8 433.5 351.4 430 347.5 425.5 344.5 420.7 341.9 415 339.7 408 336.8 391 335 366 334.1 332.5 333.6 282 333.4 14.5Z" fill="#4591ff"/>
<path d="M334.5 14.5 395.3 14.5 395.5 233 396 273.5 397.1 301 399.4 324.5 401.1 334 403.2 342.5 405.9 350 409 356.3 412.8 362 417 366.7 422 370.9 427.9 374.5 434.5 377.5 442 379.9 450.5 382 460.5 383.6 485.5 385.9 514.5 386.9 556.5 387.5 783.5 387.6 783.5 446.3 506 446.1 453 445.7 419 444.8 393 443.1 375 440.3 367.5 438.1 361.5 435.6 356.2 432.5 352 429 348.1 424.5 345.1 419.5 342.5 413.6 340.5 407 338.8 399 337.5 389.5 335.8 365 335 332.5 334.5 281.8 334.3 14.5Z" fill="#4685ff"/>
<path d="M335.5 14.5 393.2 14.5 393.4 234.5 393.9 275 395 302.5 397.3 326.5 399 336 401.2 344.5 403.9 352 407 358.4 410.8 364 415 368.7 420 372.8 426 376.5 432.5 379.5 440 381.9 449 384.1 459 385.7 484 387.9 513 389 555 389.5 783.5 389.7 783.5 445.4 507.5 445.2 454.5 444.8 420 443.9 394 442.3 376 439.5 369 437.5 362.8 435 357.5 432 353 428.3 349.2 424 346.1 419 343.5 413.1 341.5 406.5 338.5 389.2 336.8 364.5 335.9 332 335.4 281 335.3 14.5Z" fill="#4779ff"/>
<path d="M336.5 14.5 391 14.5 391.2 236 391.7 276.5 392.9 304.5 395.2 328.5 396.9 338 399.1 346.5 401.8 354 405 360.5 408.7 366 413 370.7 418 374.9 423.9 378.5 430.5 381.5 438.1 384 447 386.1 457 387.7 482 390 511 391.1 553 391.6 783.5 391.7 783.5 444.4 508.5 444.2 455.5 443.8 420.5 443 394.5 441.3 376.6 438.5 369.5 436.5 363.5 434 358.2 431 353.9 427.5 350.4 423.5 347.2 418.5 344.5 412.5 342.5 406 340.8 398 339.5 388.7 337.8 364 336.9 331 336.4 280 336.2 14.5Z" fill="#486eff"/>
<path d="M337.5 14.5 388.8 14.5 389 238.5 389.5 279 390.7 306.5 393 330.5 394.8 340 396.9 348.5 399.7 356 402.9 362.5 406.6 368 411 372.8 416.1 377 422 380.6 429 383.7 436.5 386.2 445.5 388.3 455.5 389.9 480.5 392.1 509.5 393.2 551.5 393.7 783.5 393.9 783.5 443.4 509 443.2 456 442.8 421 442 395 440.3 377.3 437.5 370.3 435.5 364.2 433 359.1 430 354.8 426.5 351 422.2 348 417.3 345.5 411.6 343.5 405 341.8 397 340.5 387.6 338.8 363.5 337.9 331 337.5 279.5 337.3 14.5Z" fill="#4862ff"/>
<path d="M338.5 14.5 386.6 14.5 386.7 239.5 387.3 280 388.3 307.5 390.7 332 392.4 341.5 394.6 350 397.3 357.5 400.4 364 404.1 369.5 408.5 374.5 413.5 378.7 419.5 382.5 426.5 385.7 434 388.2 442.5 390.2 452.5 391.9 478 394.3 506.5 395.3 549 395.9 783.5 396 783.5 442.3 509.5 442.1 456 441.7 421.5 440.9 396 439.2 378.4 436.5 371.3 434.5 365.2 432 360 429 355.8 425.5 352 421.2 349 416.3 346.5 410.6 344.5 404 341.6 387 340 363 339.1 329 338.6 277.5 338.4 14.5Z" fill="#4956ff"/>
<path d="M340 14.5 384.2 14.5 384.4 241 384.9 281.5 386 309.5 388.4 334 390.1 343.5 392.3 352 395 359.5 398.2 366 402 371.8 406.5 376.8 411.5 381 417.5 384.7 424.5 387.9 432 390.4 441 392.6 451 394.3 476.5 396.6 505.5 397.6 547.5 398.1 783.5 398.3 783.5 441.1 511.5 440.9 457.1 440.5 421.5 439.6 396.1 438 379 435.3 372.5 433.5 366.4 431 361.2 428 356.9 424.5 353.4 420.5 350.2 415.5 347.6 409.5 345.7 403 342.9 386.5 341.2 362 340.3 328.5 339.9 276.5 339.7 14.5Z" fill="#4a4aff"/>
<path d="M341.5 14.5 381.8 14.5 381.9 243.5 382.4 284 383.5 311.5 385.9 335.5 387.7 345.5 389.9 354 392.6 361.5 395.8 368 399.8 374 404.3 379 409.5 383.3 415.5 387.1 422.5 390.3 430 392.8 439 394.9 449 396.6 474.5 398.9 503 400 545 400.5 783.5 400.7 783.5 439.8 512 439.6 457.5 439.2 422.5 438.4 397.5 436.8 380 434.1 373 432.1 367.5 429.8 362.5 427 358.2 423.5 354.5 419.3 351.5 414.5 349 408.9 347 402.3 344.2 385.5 342.6 361.5 341.7 327.5 341.2 275 341.1 14.5Z" fill="#4a4aff"/>
<path d="M343 14.5 379.1 14.5 379.3 245.5 379.8 286 380.9 313.5 383.3 337.5 385.1 347.5 387.3 356 390 363.5 393.5 370.5 397.5 376.4 402 381.3 407.5 385.9 413.4 389.5 420.5 392.7 428 395.2 437 397.4 447 399.1 472.5 401.4 501.5 402.5 543.5 403 783.5 403.2 783.5 438.3 514 438.1 458.5 437.7 423 436.9 398.5 435.4 381 432.7 374.5 430.9 368.6 428.5 363.5 425.5 359.5 422.3 356 418.4 353 413.7 350.5 408.1 348.5 401.6 345.7 385 344.1 361.5 343.2 327 342.8 274 342.6 14.5Z" fill="#4a4aff"/>
<path d="M344.5 14.5 376.3 14.5 376.5 247.5 377 288 378.1 315.5 380.6 340 382.5 350 384.7 358.5 387.5 366 390.8 372.5 394.8 378.5 399.5 383.7 405 388.3 411 392 418 395.2 426 397.9 435 400.1 445 401.8 470.5 404.2 499 405.2 541 405.7 783.5 405.9 783.5 436.6 516.5 436.4 458.6 436 422.5 435.2 398.5 433.7 382 431.1 375.5 429.3 369.8 427 365 424.2 361 421 357.4 417 354.5 412.4 352 406.8 350.1 400.5 347.5 385.5 345.9 362.5 345 327 344.5 272 344.3 14.5Z" fill="#4a4af6"/>
<path d="M346.5 14.5 373.2 14.5 373.3 250 373.8 289.5 374.9 317 377.4 341.5 379.3 351.5 381.7 360.5 384.7 368.5 388 375 392.1 381 397 386.4 402.5 390.9 409 394.9 416 398.1 424 400.8 433.5 403.1 443.5 404.8 469 407.2 497 408.3 538.5 408.7 783.5 408.9 783.5 434.6 519 434.4 459.5 434 421.5 433.2 399 431.8 383 429.3 376.5 427.5 371.5 425.5 366.5 422.6 362.5 419.4 359.1 415.5 356.2 411 354 406 352 399.7 349.5 385 347.9 363 347.1 327 346.6 269.5 346.4 14.5Z" fill="#4b4be8"/>
<path d="M349.5 14.5 369.5 14.5 369.6 253.5 370.1 292.5 371.2 319 373.8 343.5 375.8 353.5 378.2 362.5 381.3 370.5 384.9 377.5 389 383.5 393.9 389 399.5 393.7 406 397.8 413.5 401.3 421.5 404.1 430.5 406.4 441 408.2 467 410.8 494.5 411.8 535.5 412.3 783.5 412.5 783.5 432 525.5 431.8 419 430.7 398.5 429.4 383.3 427 377 425.1 372.1 423 367.9 420.5 364.3 417.5 361 413.8 358.3 409.5 356 404.5 354.3 399 351.9 385 350.5 364.5 349.3 263 349.1 14.5Z" fill="#4b4bd9"/>
<path d="M353.5 14.5 364.2 14.5 364.3 263.5 365.1 302 366.7 328 369.9 349.5 372.2 359 374.8 367 378 374.5 381.6 381 385.9 387 390.5 392 396 396.7 402 400.7 409 404.3 416.5 407.3 425 409.9 435 412.1 457.5 415.1 485 416.7 524 417.4 783.5 417.5 783.5 428 413 427.3 396 426.2 383.3 424 373.9 420.5 369.8 418 366.5 415.3 363.5 411.9 361 408 357.4 399 355.2 387 354.1 370.5 353.4 14.5Z" fill="#4b4bcb"/>
<path d="M362.5 363.8 364 364.2 365.5 365.9 376.7 384.5 381.4 390.5 386.5 396 392.5 401.2 399 405.8 418.2 416.5 419.9 418 419.8 419.5 415.8 421 408 421.9 399 422 390.5 421.2 384 419.9 378.3 418 373.5 415.5 369.5 412.3 366 408.1 363.5 403.5 361.6 398 360.3 392 359.6 383.5 359.7 374.5 360.7 367.5 362.3 364Z" fill="#4b4bbd"/>
<path d="M783.5 434.3 518.8 434.1 456.3 433.6 421.8 432.9 398.8 431.5 388.9 430.2 382.3 428.8 376.1 427 370.8 424.7 366.6 422.2 362.7 419.1 359.3 415.2 356.7 411.2 354.4 406.1 352.4 400.1 351 393.8 349.7 384.3 348.3 362.2 347.5 329 347 268.9 346.8 14.3M372.7 14.3 372.8 251.5 373.4 291 374.5 317.9 375.5 330.5 376.9 341.6 378.7 351.1 381.2 360.6 384.1 368.5 387.3 374.8 391.5 381.1 395.7 385.9 401.2 390.6 407 394.4 413.6 397.7 421.8 400.7 430 402.9 441.5 405.1 454.7 406.6 467.8 407.6 495.8 408.7 536.9 409.2 783.5 409.4" fill="none" stroke="#1919ca" stroke-width="0.9"/>
<path d="M783.5 442.6 512.2 442.4 457.9 442 422.5 441.2 396.7 439.6 385.6 438.2 377.4 436.6 370.8 434.7 364.2 431.9 359.3 428.9 356 426.3 352.3 422.2 349.2 417.5 346.3 411.2 344.4 404.9 342.7 397 341.2 386.3 339.6 362.2 338.7 327.4 338.3 275.2 338.1 14.3M387.2 14.3 387.4 240.4 387.9 281.5 389.1 308.4 390.1 321.1 391.5 332.1 393.2 341.6 395.7 351.1 398.8 358.9 402 365.1 405.6 370.1 410 374.8 415.2 378.9 420.1 381.9 426.7 385 434.9 387.7 444.8 390 454.7 391.5 466.2 392.8 479.3 393.7 507.3 394.7 550 395.3 783.5 395.4" fill="none" stroke="#192cff" stroke-width="0.9"/>
<path d="M783.5 447.7 505.6 447.5 451.4 447.1 416.8 446.2 403.7 445.5 390.5 444.4 380.7 443 372.5 441.3 365.9 439.3 359.3 436.5 354.4 433.4 350.5 430.2 347.7 427 344.5 422.2 341.5 415.9 339.5 409.6 337.7 401.7 336.3 392.3 335.1 379.6 334.4 366.9 333.5 333.7 333 281.5 332.9 14.3M398.8 14.3 399 229.4 399.5 270.5 400.6 297.3 401.6 310 402.9 321.1 404.5 330.5 406.5 338.5 409.2 346.4 412.2 352.7 416.4 359 420.1 363.2 424.5 366.9 430 370.5 436.6 373.6 444.8 376.4 453 378.4 462.9 380.1 474.4 381.4 487.5 382.4 515.5 383.5 558.2 384.1 783.5 384.3" fill="none" stroke="#1978ff" stroke-width="0.9"/>
<path d="M783.5 451.5 502.3 451.3 449.7 450.9 416.8 450.1 390.5 448.5 382.1 447.5 372.5 445.9 364.2 443.7 357.9 441.2 352.2 438.1 347.8 434.6 343.7 430.2 340.5 425.4 337.9 420 335.5 412.8 333.8 404.9 332.3 395.4 331.3 384.3 330.4 370.1 329.5 338.5 329.1 287.9 328.9 14.3M409.7 14.3 409.9 221.5 410.5 262.6 411.7 289.4 412.7 302.1 414.1 313.2 415.9 322.6 418 330.5 420.2 336.9 423.4 343.3 426.7 348.3 431.6 353.7 436.2 357.4 441.5 360.7 448.1 363.6 456.3 366.3 464.5 368.2 474.4 369.8 485.9 371 499 372 528.6 373 569.7 373.6 783.5 373.8" fill="none" stroke="#19c7ff" stroke-width="0.9"/>
<path d="M783.5 454.6 499 454.5 446.4 454.1 413.6 453.3 398.8 452.5 387.2 451.6 379 450.6 369.2 448.9 362.6 447.2 355.1 444.4 349.4 441.2 344.5 437.4 339.6 431.8 336.7 427 333.9 420.7 332 414.3 330.3 406.4 329 397 327.9 385.9 327.1 371.7 326.2 340 325.8 289.4 325.6 14.3M420.7 14.3 420.9 212 421.5 251.5 422.6 278.4 423.6 291 424.9 302.1 426.6 311.6 428.6 319.5 430.8 325.8 433.8 332.1 436.7 336.9 441.5 342.5 446 346.4 451.4 349.8 457.9 352.9 466.2 355.6 474.4 357.5 484.2 359.2 495.8 360.5 507.3 361.3 535.2 362.4 576.3 363 783.5 363.2" fill="none" stroke="#3fffd3" stroke-width="0.9"/>
<path d="M783.5 457.3 494.1 457.2 444.8 456.8 410.3 455.9 395.5 455.2 382.3 454 372.5 452.7 364.2 451 357.7 449 351.1 446.3 346.1 443.4 341.5 439.6 337.9 435.7 334.3 430.2 331.4 423.8 329.4 417.5 327.7 409.6 326.3 400.1 325.1 387.5 324.3 374.8 323.4 341.6 323 294.2 322.8 14.3M432 14.3 432.3 204.1 432.9 242 434 268.9 434.9 280.2 436.2 291 437.9 300.5 439.9 308.5 442 314.7 444.9 321.1 449 327.4 453 331.9 457.9 336 462.9 339.1 469.4 342.1 477.6 344.8 485.9 346.7 495.8 348.3 507 349.5 518.8 350.4 546.7 351.5 586.2 352 783.5 352.3" fill="none" stroke="#7bff96" stroke-width="0.9"/>
<path d="M783.5 459.7 495.8 459.6 443.1 459.2 410.3 458.4 384 456.8 372.9 455.4 364.2 453.9 356 451.6 349.8 449.1 344.2 446 339.6 442.3 334.6 436.8 331.5 431.7 328.8 425.4 326.8 419.1 325.1 411.2 323.7 401.7 322.7 390.6 321.9 376.4 321 344.8 320.5 294.2 320.4 14.3M444.2 14.3 444.5 194.6 445.1 230.9 446.2 257.8 447.3 270.5 448.5 280 450.2 289.4 452.2 297.3 454.7 304.4 457.3 310 460.3 314.7 464.5 319.7 469.4 323.9 474.4 327.1 481 330.2 487.5 332.5 495.8 334.5 505.6 336.3 515.5 337.5 528.6 338.5 556.6 339.7 596 340.3 783.5 340.6" fill="none" stroke="#bbff56" stroke-width="0.9"/>
<path d="M783.5 461.8 492.5 461.7 439.9 461.3 405.3 460.4 390.5 459.6 379 458.6 369.2 457.3 360.9 455.7 354.4 453.8 347.8 451.2 341.4 447.5 337.4 444.4 333.1 439.6 330 434.9 327.1 428.6 324.8 421.5 323.1 414.3 321.5 403.3 319.7 379.6 318.8 346.4 318.3 295.8 318.1 14.3M457.7 14.3 458 185.1 458.7 223 459.9 248.3 461.1 261 462.4 270.5 464 278.4 466.1 286.3 468.5 292.6 471.8 298.9 475.1 303.7 479.3 308.2 484.2 312.1 489.2 315 495.8 317.9 502.3 320 510.5 321.9 518.8 323.3 528.6 324.5 541.8 325.6 569.7 326.8 607.5 327.4 783.5 327.6" fill="none" stroke="#fbf219" stroke-width="0.9"/>
<path d="M783.5 463.7 487.5 463.6 438.2 463.2 403.7 462.3 390.5 461.7 377.4 460.5 367.5 459.2 359.3 457.6 351.7 455.4 344.5 452.4 339.6 449.5 335.2 446 331.4 441.7 327.9 436.5 325 430.2 322.9 423.8 321.1 415.9 319.7 406.4 318.4 393.8 317.6 379.6 316.7 346.4 316.3 298.9 316.2 14.3M473 14.3 473.3 174 474 208.8 475.2 234.1 476.2 245.2 477.5 254.7 479 262.6 481 270.5 483.3 276.8 486.3 283.1 489.4 287.9 493.6 292.6 497.4 295.9 502.3 299.2 508.2 302.1 515.5 304.7 523.7 306.8 532.5 308.4 543.4 309.8 554.9 310.8 581.2 312 617.4 312.6 783.5 312.9" fill="none" stroke="#ffac19" stroke-width="0.9"/>
<path d="M783.5 465.5 487.5 465.4 434.9 464.9 402 464.1 387.7 463.4 375.7 462.3 365.9 461 357.7 459.4 349.5 457 342.9 454.2 337.9 451.3 333.3 447.5 329.7 443.6 326.1 438.1 323.1 431.7 321.1 425.4 319.3 417.5 317.8 408 316.6 395.4 315.8 381.1 314.9 349.5 314.5 298.9 314.3 14.3M491.1 14.3 491.4 159.8 492.2 194.6 493.5 218.3 494.5 229.4 495.9 238.9 497.4 246.8 499.6 254.7 502 261 504.4 265.7 507.5 270.5 511.7 275.2 515.5 278.5 520.4 281.8 526.3 284.7 533.6 287.3 541.8 289.4 550 290.9 569.7 293.1 594.4 294.4 630.6 295.1 783.5 295.5" fill="none" stroke="#ff6319" stroke-width="0.9"/>
<path d="M783.5 467.1 485.9 467 433.3 466.6 400.4 465.7 385.6 465 374.1 463.9 364.2 462.6 356 461 347.8 458.6 341.2 455.8 336.3 452.9 331.6 449.1 328.1 445.2 324.4 439.6 321.5 433.3 319 425.4 317.3 417.5 315.9 408 314.9 397 314.1 382.7 313.2 351.1 312.8 300.5 312.6 14.3M513.8 14.3 514.2 144 515 175.6 516.4 199.3 517.4 208.8 518.8 218.3 520.4 226.1 522.2 232.5 524.6 238.9 527 243.7 530.3 248.8 534 253.1 538.5 257 543.4 260.2 548.4 262.6 554.9 265.1 561.5 266.9 569.7 268.6 579.6 270 589.5 271 614.1 272.5 647 273.2 783.5 273.7" fill="none" stroke="#ea1a19" stroke-width="0.9"/>
<path d="M545.4 14 545.4 131.7 548.9 136.9 548.9 182.3 551.5 186 551.6 198.3 555.2 203.3 555.7 209.1 558.6 213.5 565.4 222.2 566.1 224.3 569 224.8 574.8 230.1 578.4 230.9 582 233.5 588.6 233.8 591.9 236.9 605 236.9 608.1 239.8 657.5 239.8 661.2 243.5 785 243.5" fill="none" stroke="#840000" stroke-width="0.9" stroke-linejoin="round"/>
<path d="M310.6 14 310.8 374.6 311.9 376 311.9 398.6 314.5 401.5 314.5 421.1 317.4 424 318.1 433.4 320.3 436.3 321 439.9 326.1 445 333.3 450.8 338.4 455.9 343.8 459 347.5 462 357.5 462 360.6 465 380.6 465 383.8 468 785 468.3" fill="none" stroke="#840000" stroke-width="0.9" stroke-linejoin="round"/>
<line x1="372.45" y1="14.4" x2="372.45" y2="480.7" stroke="#262626" stroke-opacity="0.08" stroke-width="0.7"/><line x1="454.65" y1="14.4" x2="454.65" y2="480.7" stroke="#262626" stroke-opacity="0.08" stroke-width="0.7"/><line x1="536.85" y1="14.4" x2="536.85" y2="480.7" stroke="#262626" stroke-opacity="0.08" stroke-width="0.7"/><line x1="619.05" y1="14.4" x2="619.05" y2="480.7" stroke="#262626" stroke-opacity="0.08" stroke-width="0.7"/><line x1="701.25" y1="14.4" x2="701.25" y2="480.7" stroke="#262626" stroke-opacity="0.08" stroke-width="0.7"/><line x1="298.5" y1="409.60" x2="783.5" y2="409.60" stroke="#262626" stroke-opacity="0.08" stroke-width="0.7"/><line x1="298.5" y1="330.55" x2="783.5" y2="330.55" stroke="#262626" stroke-opacity="0.08" stroke-width="0.7"/><line x1="298.5" y1="251.50" x2="783.5" y2="251.50" stroke="#262626" stroke-opacity="0.08" stroke-width="0.7"/><line x1="298.5" y1="172.45" x2="783.5" y2="172.45" stroke="#262626" stroke-opacity="0.08" stroke-width="0.7"/><line x1="298.5" y1="93.40" x2="783.5" y2="93.40" stroke="#262626" stroke-opacity="0.08" stroke-width="0.7"/>
<path d="M329.7 203.8C332.3 205.5 339.4 210.7 345.5 213.8C351.6 216.8 359.4 219.1 366.3 221.8C373.2 224.6 381.3 227.5 387.1 230.0C392.9 232.5 397.4 233.5 401.0 237.0C404.6 240.5 408.3 247.0 408.7 250.8C409.1 254.6 407.3 256.5 403.3 260.0C399.3 263.5 392.1 268.6 384.8 271.7C377.5 274.8 367.1 276.6 359.4 278.6C351.7 280.6 343.3 281.7 338.5 283.7C333.7 285.7 330.8 288.4 330.4 290.6C330.0 292.8 332.1 294.7 336.2 297.1C340.2 299.5 348.1 302.5 354.7 305.2C361.3 307.9 368.7 310.4 375.6 313.3C382.6 316.2 390.6 319.1 396.4 322.6C402.2 326.1 407.3 329.8 410.3 334.2C413.3 338.6 414.6 343.7 414.5 349.3C414.4 354.9 411.8 360.9 409.4 367.8C407.0 374.7 403.7 383.2 400.2 390.9C396.7 398.6 392.5 406.7 388.6 414.0C384.7 421.3 380.5 430.2 377.0 434.9C373.5 439.5 369.7 442.7 367.8 441.9C365.9 441.1 365.7 434.9 365.5 430.3C365.3 425.7 365.8 419.8 366.6 414.0C367.4 408.2 368.9 401.8 370.1 395.6C371.3 389.4 372.5 383.2 373.6 377.0C374.7 370.8 376.0 363.8 376.6 358.5C377.2 353.2 377.5 349.2 377.5 345.0C377.5 340.8 377.0 336.7 376.5 333.0C376.0 329.3 375.5 327.4 374.4 322.6C373.3 317.8 371.7 310.2 369.8 304.0C367.9 297.8 365.3 291.8 362.8 285.6C360.3 279.4 357.2 273.2 354.7 267.0C352.2 260.8 349.4 254.7 347.8 248.5C346.2 242.3 345.4 234.1 345.0 230.0C344.6 225.9 345.2 227.1 345.5 224.2C345.8 221.3 345.6 216.8 346.6 212.6C347.6 208.3 349.1 203.7 351.2 198.7C353.4 193.7 356.7 187.9 359.4 182.5C362.1 177.1 365.1 171.7 367.5 166.3C369.9 160.9 372.2 155.7 373.7 150.0C375.2 144.3 376.0 137.3 376.5 132.0C377.0 126.7 377.0 123.7 376.5 118.0C376.0 112.3 375.2 104.4 373.7 98.0C372.2 91.6 369.9 85.7 367.5 79.5C365.1 73.3 362.1 67.2 359.4 61.0C356.7 54.8 353.4 47.8 351.3 42.4C349.2 37.0 347.7 33.2 346.6 28.5C345.5 23.8 345.2 17.3 344.8 14.2C344.4 11.1 344.6 10.7 344.5 10.0" fill="none" stroke="#000" stroke-width="2.8" stroke-linejoin="round" stroke-linecap="round"/>
</g>
<line x1="372.45" y1="480.7" x2="372.45" y2="475.7" stroke="#6a1a1a" stroke-opacity="0.85" stroke-width="0.9"/><line x1="454.65" y1="480.7" x2="454.65" y2="475.7" stroke="#6a1a1a" stroke-opacity="0.85" stroke-width="0.9"/><line x1="536.85" y1="480.7" x2="536.85" y2="475.7" stroke="#6a1a1a" stroke-opacity="0.85" stroke-width="0.9"/><line x1="619.05" y1="480.7" x2="619.05" y2="475.7" stroke="#6a1a1a" stroke-opacity="0.85" stroke-width="0.9"/><line x1="701.25" y1="480.7" x2="701.25" y2="475.7" stroke="#6a1a1a" stroke-opacity="0.85" stroke-width="0.9"/><line x1="783.45" y1="480.7" x2="783.45" y2="475.7" stroke="#6a1a1a" stroke-opacity="0.85" stroke-width="0.9"/><line x1="298.5" y1="409.60" x2="303.5" y2="409.60" stroke="#6a1a1a" stroke-opacity="0.85" stroke-width="0.9"/><line x1="298.5" y1="330.55" x2="303.5" y2="330.55" stroke="#6a1a1a" stroke-opacity="0.85" stroke-width="0.9"/><line x1="298.5" y1="251.50" x2="303.5" y2="251.50" stroke="#6a1a1a" stroke-opacity="0.85" stroke-width="0.9"/><line x1="298.5" y1="172.45" x2="303.5" y2="172.45" stroke="#6a1a1a" stroke-opacity="0.85" stroke-width="0.9"/><line x1="298.5" y1="93.40" x2="303.5" y2="93.40" stroke="#6a1a1a" stroke-opacity="0.85" stroke-width="0.9"/><line x1="298.5" y1="14.35" x2="303.5" y2="14.35" stroke="#6a1a1a" stroke-opacity="0.85" stroke-width="0.9"/><line x1="299.0" y1="14.4" x2="299.0" y2="480.7" stroke="#7a2020" stroke-opacity="0.9" stroke-width="1"/><line x1="298.5" y1="480.2" x2="783.5" y2="480.2" stroke="#7a2020" stroke-opacity="0.9" stroke-width="1"/><line x1="298.5" y1="13.9" x2="784.0" y2="13.9" stroke="#ffffff" stroke-opacity="0.6" stroke-width="1"/><line x1="784.0" y1="13.9" x2="784.0" y2="481.7" stroke="#ffffff" stroke-opacity="0.8" stroke-width="1"/><line x1="298.5" y1="481.2" x2="784.0" y2="481.2" stroke="#ffffff" stroke-opacity="0.6" stroke-width="1"/>
<path d="M0 512.5 A4 4 0 0 0 4 516.5 H10 V518 H0 Z" fill="#2b2b2b"/>
<path d="M0.7 512.3 A3.8 3.8 0 0 0 4.3 516" fill="none" stroke="#fafafa" stroke-width="0.8"/>
<path d="M800 512.5 A4 4 0 0 1 796 516.5 H790 V518 H800 Z" fill="#2b2b2b"/>
<path d="M799.3 512.3 A3.8 3.8 0 0 1 795.7 516" fill="none" stroke="#fafafa" stroke-width="0.8"/>
</svg>
<div class="t" style="left:222.45px;width:300px;text-align:center;top:482.97px;font-size:7px;line-height:14px;color:#2a2a2a;">1</div><div class="t" style="left:304.65px;width:300px;text-align:center;top:482.97px;font-size:7px;line-height:14px;color:#2a2a2a;">1.5</div><div class="t" style="left:386.85px;width:300px;text-align:center;top:482.97px;font-size:7px;line-height:14px;color:#2a2a2a;">2</div><div class="t" style="left:469.05px;width:300px;text-align:center;top:482.97px;font-size:7px;line-height:14px;color:#2a2a2a;">2.5</div><div class="t" style="left:551.25px;width:300px;text-align:center;top:482.97px;font-size:7px;line-height:14px;color:#2a2a2a;">3</div><div class="t" style="left:633.45px;width:300px;text-align:center;top:482.97px;font-size:7px;line-height:14px;color:#2a2a2a;">3.5</div><div class="t" style="left:-5.80px;width:300px;text-align:right;top:403.97px;font-size:7px;line-height:14px;color:#2a2a2a;">1</div><div class="t" style="left:-5.80px;width:300px;text-align:right;top:324.97px;font-size:7px;line-height:14px;color:#2a2a2a;">1.5</div><div class="t" style="left:-5.80px;width:300px;text-align:right;top:245.97px;font-size:7px;line-height:14px;color:#2a2a2a;">2</div><div class="t" style="left:-5.80px;width:300px;text-align:right;top:166.97px;font-size:7px;line-height:14px;color:#2a2a2a;">2.5</div><div class="t" style="left:-5.80px;width:300px;text-align:right;top:87.97px;font-size:7px;line-height:14px;color:#2a2a2a;">3</div><div class="t" style="left:-5.80px;width:300px;text-align:right;top:7.97px;font-size:7px;line-height:14px;color:#2a2a2a;">3.5</div><div class="t" style="left:392.00px;width:300px;text-align:center;top:490.82px;font-size:8.6px;line-height:17.2px;color:#3a3a3a;font-family:'Liberation Serif',serif;letter-spacing:0.15px">A-B bond distance (Å)</div><div class="t" style="left:126.80px;top:238.40px;width:300px;text-align:center;font-size:8.6px;line-height:17.2px;color:#3a3a3a;font-family:'Liberation Serif',serif;letter-spacing:0.28px;transform:rotate(-90deg);transform-origin:150px 8.6px">B-C bond distance (Å)</div>
</body></html>
